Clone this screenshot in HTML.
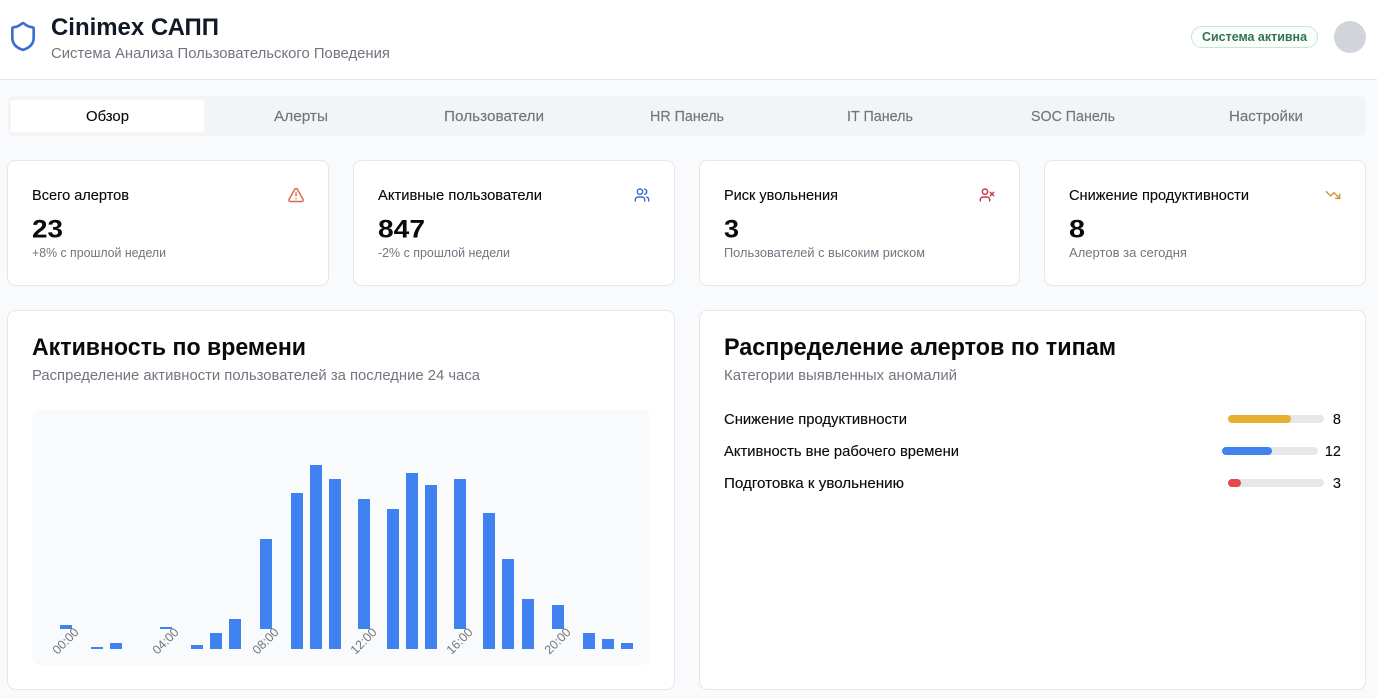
<!DOCTYPE html>
<html lang="ru">
<head>
<meta charset="utf-8">
<title>Cinimex САПП</title>
<style>
html,body{margin:0;padding:0;width:1377px;height:699px;overflow:hidden;background:#f9fafb}
svg{position:absolute;left:0;top:0;display:block}
text{font-family:"Liberation Sans",sans-serif;white-space:pre}
.h{font-weight:700;fill:#0a0a0a;font-size:24px}
.n{font-weight:700;fill:#0a0a0a;font-size:25px}
.s{font-size:14.5px;fill:#71757f}
.m{font-size:14.5px;fill:#0a0a0a;stroke:#0a0a0a;stroke-width:.12px}
.t{font-size:14.5px;fill:#71757f;stroke:#71757f;stroke-width:.15px}
.x{font-size:12.5px;fill:#71757f}
.l{font-size:12.5px;fill:#71757f}
</style>
</head>
<body>
<svg width="1377" height="699" viewBox="0 0 1377 699" xmlns="http://www.w3.org/2000/svg">
<!-- header -->
<rect x="0" y="0" width="1377" height="79" fill="#fff"/>
<rect x="0" y="79" width="1377" height="1" fill="#e3e5e8"/>
<g transform="translate(7 20.5) scale(1.3333)" fill="none" stroke="#3a6fd0" stroke-width="2" stroke-linecap="round" stroke-linejoin="round">
<path d="M20 13c0 5-3.5 7.5-7.66 8.95a1 1 0 0 1-.67-.01C7.5 20.5 4 18 4 13V6a1 1 0 0 1 1-1c2 0 4.5-1.2 6.24-2.72a1.17 1.17 0 0 1 1.52 0C14.51 3.81 17 5 19 5a1 1 0 0 1 1 1z"/>
</g>
<text class="h" x="51" y="35" textLength="168" lengthAdjust="spacingAndGlyphs" style="fill:#111827">Cinimex САПП</text>
<text class="s" x="51" y="58" textLength="339" lengthAdjust="spacingAndGlyphs">Система Анализа Пользовательского Поведения</text>
<rect x="1191.5" y="26.5" width="126" height="21" rx="10.5" fill="#fbfefc" stroke="#c4e8d2"/>
<text x="1202" y="41" font-size="12.5" font-weight="700" fill="#2f7350" textLength="105" lengthAdjust="spacingAndGlyphs">Система активна</text>
<circle cx="1350" cy="37" r="16" fill="#d1d5db"/>

<!-- tabs -->
<rect x="8" y="96" width="1358" height="40" rx="6" fill="#f3f4f6"/>
<rect x="11" y="100" width="193" height="32" rx="3" fill="#fff"/>
<text class="m" x="86" y="121" textLength="43" lengthAdjust="spacingAndGlyphs">Обзор</text>
<text class="t" x="274" y="121" textLength="54" lengthAdjust="spacingAndGlyphs">Алерты</text>
<text class="t" x="444" y="121" textLength="100" lengthAdjust="spacingAndGlyphs">Пользователи</text>
<text class="t" x="650" y="121" textLength="74" lengthAdjust="spacingAndGlyphs">HR Панель</text>
<text class="t" x="847" y="121" textLength="66" lengthAdjust="spacingAndGlyphs">IT Панель</text>
<text class="t" x="1031" y="121" textLength="84" lengthAdjust="spacingAndGlyphs">SOC Панель</text>
<text class="t" x="1229" y="121" textLength="74" lengthAdjust="spacingAndGlyphs">Настройки</text>

<!-- stat cards -->
<g fill="#fff" stroke="#e5e7eb">
<rect x="7.5" y="160.5" width="321" height="125" rx="8"/>
<rect x="353.5" y="160.5" width="321" height="125" rx="8"/>
<rect x="699.5" y="160.5" width="320" height="125" rx="8"/>
<rect x="1044.5" y="160.5" width="321" height="125" rx="8"/>
<rect x="7.5" y="310.5" width="667" height="379" rx="8"/>
<rect x="699.5" y="310.5" width="666" height="379" rx="8"/>
</g>

<text class="m" x="32" y="200" textLength="97" lengthAdjust="spacingAndGlyphs">Всего алертов</text>
<text class="m" x="378" y="200" textLength="164" lengthAdjust="spacingAndGlyphs">Активные пользователи</text>
<text class="m" x="724" y="200" textLength="114" lengthAdjust="spacingAndGlyphs">Риск увольнения</text>
<text class="m" x="1069" y="200" textLength="180" lengthAdjust="spacingAndGlyphs">Снижение продуктивности</text>

<text class="n" x="32" y="237.5" textLength="31" lengthAdjust="spacingAndGlyphs">23</text>
<text class="n" x="378" y="237.5" textLength="47" lengthAdjust="spacingAndGlyphs">847</text>
<text class="n" x="724" y="237.5" textLength="15" lengthAdjust="spacingAndGlyphs">3</text>
<text class="n" x="1069" y="237.5" textLength="16" lengthAdjust="spacingAndGlyphs">8</text>

<text class="x" x="32" y="257" textLength="134" lengthAdjust="spacingAndGlyphs">+8% с прошлой недели</text>
<text class="x" x="378" y="257" textLength="132" lengthAdjust="spacingAndGlyphs">-2% с прошлой недели</text>
<text class="x" x="724" y="257" textLength="201" lengthAdjust="spacingAndGlyphs">Пользователей с высоким риском</text>
<text class="x" x="1069" y="257" textLength="118" lengthAdjust="spacingAndGlyphs">Алертов за сегодня</text>

<!-- stat icons -->
<g transform="translate(287.4 186.4) scale(.72)" fill="none" stroke="#d2694a" stroke-width="2" stroke-linecap="round" stroke-linejoin="round">
<path d="m21.73 18-8-14a2 2 0 0 0-3.48 0l-8 14A2 2 0 0 0 4 21h16a2 2 0 0 0 1.73-3"/><path d="M12 9v4"/><path d="M12 17h.01"/>
</g>
<g transform="translate(634 187) scale(.6667)" fill="none" stroke="#3a6fd0" stroke-width="2.2" stroke-linecap="round" stroke-linejoin="round">
<path d="M16 21v-2a4 4 0 0 0-4-4H6a4 4 0 0 0-4 4v2"/><circle cx="9" cy="7" r="4"/><path d="M22 21v-2a4 4 0 0 0-3-3.87"/><path d="M16 3.13a4 4 0 0 1 0 7.75"/>
</g>
<g transform="translate(979 187) scale(.6667)" fill="none" stroke="#c93a48" stroke-width="2.2" stroke-linecap="round" stroke-linejoin="round">
<path d="M16 21v-2a4 4 0 0 0-4-4H6a4 4 0 0 0-4 4v2"/><circle cx="9" cy="7" r="4"/><path d="m17 8 5 5"/><path d="m22 8-5 5"/>
</g>
<g transform="translate(1325 187) scale(.6667)" fill="none" stroke="#cf9a35" stroke-width="2.2" stroke-linecap="round" stroke-linejoin="round">
<path d="M22 17l-8.5-8.5-5 5L2 7"/><path d="M16 17h6v-6"/>
</g>

<!-- left panel -->
<text class="h" x="32" y="355" textLength="274" lengthAdjust="spacingAndGlyphs">Активность по времени</text>
<text class="s" x="32" y="380" textLength="448" lengthAdjust="spacingAndGlyphs">Распределение активности пользователей за последние 24 часа</text>
<rect x="32" y="409" width="618" height="256" rx="8" fill="#f9fafb"/>
<g fill="#4082f0">
<rect x="60" y="625" width="12" height="4"/>
<rect x="91" y="647" width="12" height="2"/>
<rect x="110" y="643" width="12" height="6"/>
<rect x="160" y="627" width="12" height="2"/>
<rect x="191" y="645" width="12" height="4"/>
<rect x="210" y="633" width="12" height="16"/>
<rect x="229" y="619" width="12" height="30"/>
<rect x="260" y="539" width="12" height="90"/>
<rect x="291" y="493" width="12" height="156"/>
<rect x="310" y="465" width="12" height="184"/>
<rect x="329" y="479" width="12" height="170"/>
<rect x="358" y="499" width="12" height="130"/>
<rect x="387" y="509" width="12" height="140"/>
<rect x="406" y="473" width="12" height="176"/>
<rect x="425" y="485" width="12" height="164"/>
<rect x="454" y="479" width="12" height="150"/>
<rect x="483" y="513" width="12" height="136"/>
<rect x="502" y="559" width="12" height="90"/>
<rect x="522" y="599" width="12" height="50"/>
<rect x="552" y="605" width="12" height="24"/>
<rect x="583" y="633" width="12" height="16"/>
<rect x="602" y="639" width="12" height="10"/>
<rect x="621" y="643" width="12" height="6"/>
</g>
<g text-anchor="middle">
<text class="l" x="68.5" y="644" transform="rotate(-45 68.5 644)">00:00</text>
<text class="l" x="168.5" y="644" transform="rotate(-45 168.5 644)">04:00</text>
<text class="l" x="268.5" y="644" transform="rotate(-45 268.5 644)">08:00</text>
<text class="l" x="366.5" y="644" transform="rotate(-45 366.5 644)">12:00</text>
<text class="l" x="462.5" y="644" transform="rotate(-45 462.5 644)">16:00</text>
<text class="l" x="560.5" y="644" transform="rotate(-45 560.5 644)">20:00</text>
</g>

<!-- right panel -->
<text class="h" x="724" y="355" textLength="392" lengthAdjust="spacingAndGlyphs">Распределение алертов по типам</text>
<text class="s" x="724" y="380" textLength="233" lengthAdjust="spacingAndGlyphs">Категории выявленных аномалий</text>
<text class="m" x="724" y="424" textLength="183" lengthAdjust="spacingAndGlyphs">Снижение продуктивности</text>
<text class="m" x="724" y="456" textLength="235" lengthAdjust="spacingAndGlyphs">Активность вне рабочего времени</text>
<text class="m" x="724" y="488" textLength="180" lengthAdjust="spacingAndGlyphs">Подготовка к увольнению</text>
<rect x="1228" y="415" width="96" height="8" rx="4" fill="#e5e7eb"/>
<rect x="1228" y="415" width="63" height="8" rx="4" fill="#e8b02f"/>
<rect x="1222" y="447" width="96" height="8" rx="4" fill="#e5e7eb"/>
<rect x="1222" y="447" width="50" height="8" rx="4" fill="#4082f0"/>
<rect x="1228" y="479" width="96" height="8" rx="4" fill="#e5e7eb"/>
<rect x="1228" y="479" width="13" height="8" rx="4" fill="#e5484d"/>
<text class="m" x="1341" y="424" text-anchor="end">8</text>
<text class="m" x="1341" y="456" text-anchor="end">12</text>
<text class="m" x="1341" y="488" text-anchor="end">3</text>
</svg>
</body>
</html>
